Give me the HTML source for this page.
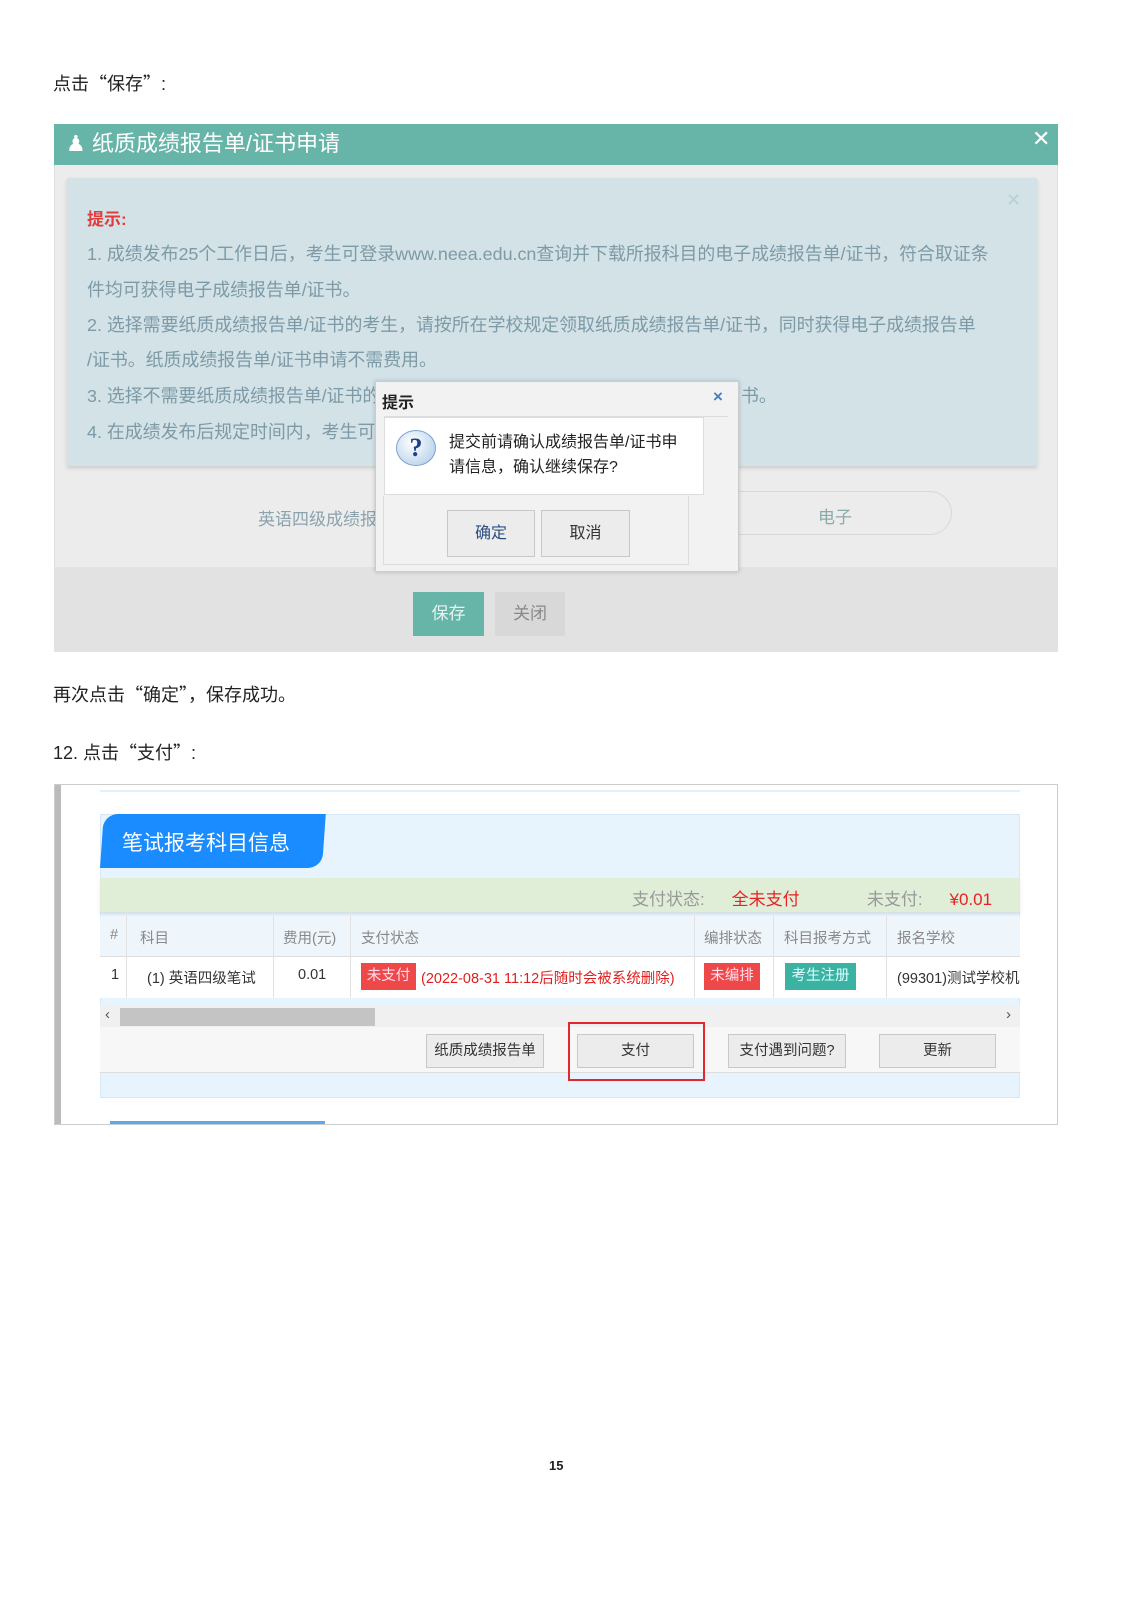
<!DOCTYPE html>
<html><head><meta charset="utf-8"><style>
*{margin:0;padding:0;box-sizing:border-box}
body{width:1130px;height:1600px;background:#fff;position:relative;font-family:"Liberation Sans","Noto Sans CJK SC",sans-serif;overflow:hidden}
.a{position:absolute;white-space:nowrap}
.p{font-size:18px;color:#222}
.q{font-family:"Noto Sans CJK SC",sans-serif}
.tip{font-size:17.9px;color:#7d9aa6;left:87px}
.btn{position:absolute;background:#ececec;border:1px solid #c8c8c8;font-size:15px;color:#333;text-align:center}
</style></head><body>
<div class="a p" style="left:53px;top:70px">点击<span class="q">“</span>保存<span class="q">”</span>:</div>

<div class="a" style="left:54px;top:124px;width:1004px;height:528px;background:#ececec;border:1px solid #ddd"></div>
<div class="a" style="left:54px;top:124px;width:1004px;height:41px;background:#67b5a9"></div>
<div class="a" style="left:66px;top:126px;color:#fff;font-size:22px">&#9823;&nbsp;纸质成绩报告单/证书申请</div>
<div class="a" style="left:1032px;top:126px;color:#fff;font-size:22px">✕</div>
<div class="a" style="left:54px;top:567px;width:1004px;height:85px;background:#e2e2e2"></div>
<div class="a" style="left:67px;top:178px;width:970px;height:288px;background:#d2e2e7;box-shadow:0 2px 4px rgba(0,0,0,.15)"></div>
<div class="a" style="left:1006px;top:190px;color:#b9cfd6;font-size:18px">✕</div>
<div class="a" style="left:87px;top:205px;color:#e23b3b;font-size:17px;font-weight:bold">提示:</div>
<div class="a tip" style="top:240px">1. 成绩发布25个工作日后，考生可登录www.neea.edu.cn查询并下载所报科目的电子成绩报告单/证书，符合取证条</div>
<div class="a tip" style="top:276px">件均可获得电子成绩报告单/证书。</div>
<div class="a tip" style="top:311px">2. 选择需要纸质成绩报告单/证书的考生，请按所在学校规定领取纸质成绩报告单/证书，同时获得电子成绩报告单</div>
<div class="a tip" style="top:346px">/证书。纸质成绩报告单/证书申请不需费用。</div>
<div class="a tip" style="top:382px">3. 选择不需要纸质成绩报告单/证书的考生，</div>
<div class="a tip" style="top:382px;left:741px">书。</div>
<div class="a tip" style="top:418px">4. 在成绩发布后规定时间内，考生可</div>
<div class="a" style="left:700px;top:491px;width:252px;height:44px;border:1px solid #d8d8d8;border-radius:0 22px 22px 0"></div>
<div class="a" style="left:818px;top:503px;color:#8aa;font-size:17px">电子</div>
<div class="a" style="left:258px;top:505px;color:#8aa3ad;font-size:17px">英语四级成绩报</div>
<div class="a" style="left:413px;top:592px;width:71px;height:44px;background:#67b5a9;color:#e6f3f0;font-size:17px;text-align:center;line-height:44px">保存</div>
<div class="a" style="left:495px;top:592px;width:70px;height:44px;background:#d8d8d8;color:#888;font-size:17px;text-align:center;line-height:44px">关闭</div>

<div class="a" style="left:375px;top:381px;width:364px;height:191px;background:#f2f2f2;border:1px solid #ccc;box-shadow:0 0 4px rgba(0,0,0,.2)"></div>
<div class="a" style="left:382px;top:389px;font-size:16px;font-weight:bold;color:#222">提示</div>
<div class="a" style="left:713px;top:387px;font-size:17px;font-weight:bold;color:#4a7ec0">×</div>
<div class="a" style="left:384px;top:416px;width:344px;height:1px;background:#ddd"></div>
<div class="a" style="left:384px;top:417px;width:320px;height:78px;background:#fff;border:1px solid #ddd"></div>
<div class="a" style="left:396px;top:430px;width:40px;height:36px;border-radius:50%;background:radial-gradient(circle at 40% 35%,#fff,#a9c8e8);border:1px solid #7aa3cc;color:#1e3f8a;font:bold 26px 'Liberation Serif',serif;text-align:center;line-height:34px">?</div>
<div class="a" style="left:449px;top:430px;font-size:16px;color:#222;line-height:25px">提交前请确认成绩报告单/证书申<br>请信息，确认继续保存?</div>
<div class="a" style="left:383px;top:496px;width:306px;height:69px;border:1px solid #ddd;border-top:0"></div>
<div class="btn" style="left:447px;top:510px;width:88px;height:47px;line-height:45px;color:#2a4f80;font-size:16px">确定</div>
<div class="btn" style="left:541px;top:510px;width:89px;height:47px;line-height:45px;font-size:16px">取消</div>

<div class="a p" style="left:53px;top:681px">再次点击<span class="q">“</span>确定<span class="q">”</span>，保存成功。</div>
<div class="a p" style="left:53px;top:739px">12. 点击<span class="q">“</span>支付<span class="q">”</span>:</div>

<div class="a" style="left:54px;top:784px;width:1004px;height:341px;border:1px solid #ccc;background:#fff"></div>
<div class="a" style="left:55px;top:785px;width:6px;height:339px;background:#bbb"></div>
<div class="a" style="left:100px;top:790px;width:920px;height:2px;background:#e3effa"></div>
<div class="a" style="left:100px;top:814px;width:920px;height:284px;background:#e8f4fd;border:1px solid #d6e9f8"></div>
<div class="a" style="left:100px;top:814px;width:222px;height:54px;background:#1a8cff;border-radius:14px 0 14px 0;transform:skewX(-4deg);transform-origin:bottom left"></div>
<div class="a" style="left:122px;top:827px;color:#fff;font-size:21px">笔试报考科目信息</div>
<div class="a" style="left:100px;top:878px;width:920px;height:34px;background:#e0eed8;box-shadow:0 2px 3px rgba(0,0,0,.1)"></div>
<div class="a" style="left:632px;top:885px;font-size:17px;color:#8a9;word-spacing:2px"><span style="color:#999">支付状态:</span>&nbsp;&nbsp;&nbsp;&nbsp;<span style="color:#e82323">全未支付</span>&nbsp;&nbsp;&nbsp;&nbsp;&nbsp;&nbsp;&nbsp;&nbsp;&nbsp;&nbsp;<span style="color:#999">未支付:</span>&nbsp;&nbsp;&nbsp;&nbsp;<span style="color:#e82323">¥0.01</span></div>
<div class="a" style="left:100px;top:916px;width:920px;height:82px;background:#fff;border-top:1px solid #e3e3e3"></div>
<div class="a" style="left:100px;top:916px;width:920px;height:41px;background:#eef5fb;border-bottom:1px solid #ddd"></div>
<div class="a" style="left:126px;top:916px;width:1px;height:82px;background:#e2e2e2"></div>
<div class="a" style="left:273px;top:916px;width:1px;height:82px;background:#e2e2e2"></div>
<div class="a" style="left:350px;top:916px;width:1px;height:82px;background:#e2e2e2"></div>
<div class="a" style="left:694px;top:916px;width:1px;height:82px;background:#e2e2e2"></div>
<div class="a" style="left:773px;top:916px;width:1px;height:82px;background:#e2e2e2"></div>
<div class="a" style="left:886px;top:916px;width:1px;height:82px;background:#e2e2e2"></div>
<div class="a" style="top:927px;left:110px;font-size:14.5px;color:#888">#</div>
<div class="a" style="top:927px;left:140px;font-size:14.5px;color:#888">科目</div>
<div class="a" style="top:927px;left:283px;font-size:14.5px;color:#888">费用(元)</div>
<div class="a" style="top:927px;left:361px;font-size:14.5px;color:#888">支付状态</div>
<div class="a" style="top:927px;left:704px;font-size:14.5px;color:#888">编排状态</div>
<div class="a" style="top:927px;left:784px;font-size:14.5px;color:#888">科目报考方式</div>
<div class="a" style="top:927px;left:897px;font-size:14.5px;color:#888">报名学校</div>
<div class="a" style="top:967px;left:111px;font-size:14.5px;color:#333">1</div>
<div class="a" style="top:967px;left:147px;font-size:14.5px;color:#333">(1) 英语四级笔试</div>
<div class="a" style="top:967px;left:298px;font-size:14.5px;color:#333">0.01</div>
<div class="a" style="top:963px;left:361px;width:55px;height:27px;background:#ee4848;color:#fde;font-size:14.5px;line-height:27px;text-align:center">未支付</div>
<div class="a" style="top:967px;left:421px;font-size:14.5px;color:#e02020">(2022-08-31 11:12后随时会被系统删除)</div>
<div class="a" style="top:963px;left:704px;width:56px;height:27px;background:#ee4848;color:#fde;font-size:14.5px;line-height:27px;text-align:center">未编排</div>
<div class="a" style="top:963px;left:785px;width:71px;height:27px;background:#3bb3a3;color:#dff;font-size:14.5px;line-height:27px;text-align:center">考生注册</div>
<div class="a" style="top:967px;left:897px;font-size:14.5px;color:#333;width:123px;overflow:hidden">(99301)测试学校机构</div>
<div class="a" style="left:100px;top:1005px;width:920px;height:22px;background:#f0f0f0"></div>
<div class="a" style="left:120px;top:1008px;width:255px;height:18px;background:#c4c4c4"></div>
<div class="a" style="left:105px;top:1006px;font-size:15px;color:#555">‹</div>
<div class="a" style="left:1006px;top:1006px;font-size:15px;color:#555">›</div>
<div class="a" style="left:100px;top:1027px;width:920px;height:46px;background:#f7f7f7;border-bottom:1px solid #ddd"></div>
<div class="btn" style="left:426px;top:1034px;width:118px;height:34px;line-height:32px;font-size:14.5px">纸质成绩报告单</div>
<div class="btn" style="left:577px;top:1034px;width:117px;height:34px;line-height:32px;font-size:14.5px">支付</div>
<div class="btn" style="left:728px;top:1034px;width:118px;height:34px;line-height:32px;font-size:14.5px">支付遇到问题?</div>
<div class="btn" style="left:879px;top:1034px;width:117px;height:34px;line-height:32px;font-size:14.5px">更新</div>
<div class="a" style="left:568px;top:1022px;width:137px;height:59px;border:2px solid #e0282e"></div>
<div class="a" style="left:110px;top:1121px;width:215px;height:3px;background:#5aa9f0"></div>

<div class="a" style="left:549px;top:1458px;font-size:13px;font-weight:bold;color:#222">15</div>
</body></html>
